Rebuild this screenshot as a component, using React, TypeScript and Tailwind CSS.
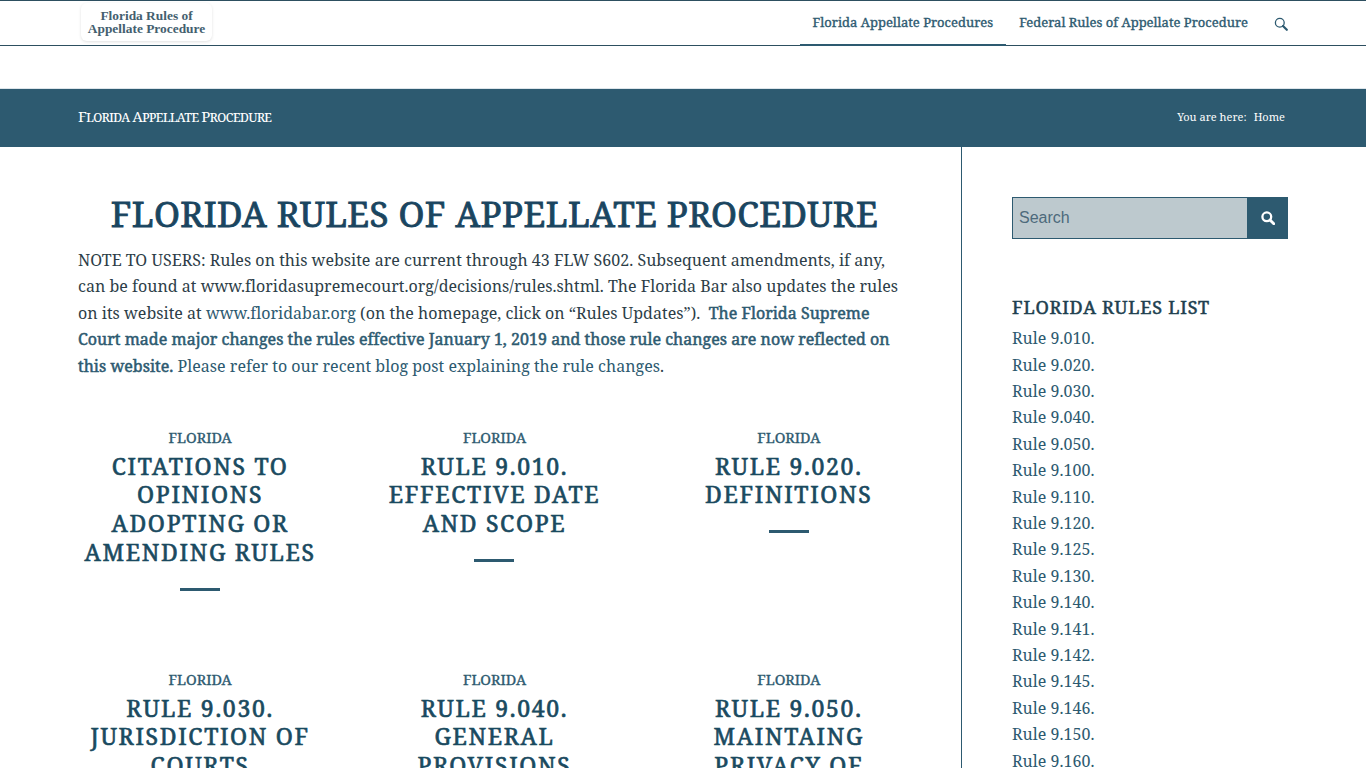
const serif = "font-['Noto_Serif','DejaVu_Serif',serif]";

const cards = [
  ["Citations to Opinions Adopting or Amending Rules"],
  ["Rule 9.010. Effective Date and Scope"],
  ["Rule 9.020. Definitions"],
  ["Rule 9.030. Jurisdiction of Courts"],
  ["Rule 9.040. General Provisions"],
  ["Rule 9.050. Maintaing Privacy of Personal Information"],
];

const rules = [
  "9.010", "9.020", "9.030", "9.040", "9.050", "9.100", "9.110", "9.120", "9.125",
  "9.130", "9.140", "9.141", "9.142", "9.145", "9.146", "9.150", "9.160",
];

const SearchIcon = ({ className, ring, handle }: { className: string; ring: number; handle: number }) => (
  <svg viewBox="0 0 14 14" fill="none" stroke="currentColor" className={className}>
    <circle cx="5.8" cy="5.8" r="4.4" strokeWidth={ring} />
    <path d="M9 9l3.8 3.8" strokeWidth={handle} strokeLinecap="round" />
  </svg>
);

const App = () => {
  return (
    <div className={`h-screen overflow-hidden bg-white text-[#2d5a70] ${serif}`}>
      <header className="h-[46px] border-t border-b border-[#2d4f60]">
        <div className="mx-[78px] flex h-[44px] items-start justify-between">
          <div className="ml-[3px] mt-[2px] flex h-[38px] w-[131px] flex-col items-center justify-center rounded-md font-['Liberation_Serif',serif] text-[13.4px] font-bold leading-[13px] text-[#44606f] shadow-[0_1px_3px_rgba(0,0,0,0.12)]">
            <span>Florida Rules of</span>
            <span>Appellate Procedure</span>
          </div>
          <nav className="flex h-[45px] items-center text-[13px] [-webkit-text-stroke:0.35px]">
            <a className="flex h-[45px] items-center border-b-2 border-[#2d5a70] px-[13px]">Florida Appellate Procedures</a>
            <a className="flex h-[45px] items-center border-b-2 border-transparent px-[13px]">Federal Rules of Appellate Procedure</a>
            <SearchIcon className="ml-[13px] h-[14px] w-[14px]" ring={1.3} handle={2.2} />
          </nav>
        </div>
      </header>

      <div className="mt-[42px] flex h-[59px] items-center justify-between border-t border-[#dde5ea] bg-[#2d5a70] pb-[3px] pl-[78px] pr-[81px] text-white">
        <h2 className="text-[15px] tracking-[-0.9px] [font-variant:small-caps]">Florida Appellate Procedure</h2>
        <div className="flex translate-y-[1px] gap-[7px] text-[11px]">
          <span>You are here:</span>
          <span>Home</span>
        </div>
      </div>

      <div className="mx-[78px] flex">
        <main className="w-[884px] border-r border-[#2d5a70] pr-[50px] pt-[43px]">
          <h1 className="text-center text-[35px] uppercase leading-[48px] tracking-[0.4px] text-[#1a4560] [-webkit-text-stroke:0.85px]">
            Florida Rules of Appellate Procedure
          </h1>
          <p className="mt-[9px] text-[16px] leading-[26.4px] tracking-[0.025px] text-[#2d3e48]">
            NOTE TO USERS: Rules on this website are current through 43 FLW S602. Subsequent amendments, if any, can be found at www.floridasupremecourt.org/decisions/rules.shtml. The Florida Bar also updates the rules on its website at{" "}
            <a className="text-[#2d5a70]">www.floridabar.org</a> (on the homepage, click on “Rules Updates”).&nbsp;{" "}
            <a className="text-[#2d5a70] [-webkit-text-stroke:0.5px]">The Florida Supreme Court made major changes the rules effective January 1, 2019 and those rule changes are now reflected on this website.</a>{" "}
            <a className="text-[#2d5a70]">Please refer to our recent blog post explaining the rule changes</a>.
          </p>
          <div className="mt-[45px] grid grid-cols-3 gap-x-[50px]">
            {cards.map(([title]) => (
              <article key={title} className="flex h-[242px] flex-col items-center text-center">
                <div className="text-[14.4px] leading-[27.5px] [-webkit-text-stroke:0.35px]">FLORIDA</div>
                <h3 className="text-[23px] uppercase leading-[28.8px] tracking-[1.7px] text-[#1a4a60] [-webkit-text-stroke:0.65px]">{title}</h3>
                <div className="mt-[21px] h-[3px] w-[40px] bg-[#2d5a70]" />
              </article>
            ))}
          </div>
        </main>

        <aside className="ml-[50px] w-[276px] pt-[50px]">
          <form className="flex h-[42px]">
            <input
              placeholder="Search"
              className="h-full min-w-0 flex-1 border border-[#2d5a70] bg-[#bdc9ce] px-[6px] font-['Liberation_Sans',sans-serif] text-[16px] text-[#2d5a70] placeholder:text-[#4d6a7c]"
            />
            <button type="button" className="flex w-[40px] items-center justify-center bg-[#2d5a70] text-white">
              <SearchIcon className="h-[14px] w-[14px]" ring={2.3} handle={2.8} />
            </button>
          </form>
          <h3 className="mt-[56px] text-[18px] uppercase leading-[24px] tracking-[0.8px] text-[#20404f] [-webkit-text-stroke:0.5px]">Florida Rules List</h3>
          <ul className="mt-[6.2px] text-[16px] leading-[26.4px] tracking-[0.025px]">
            {rules.map((r) => (
              <li key={r}>Rule {r}.</li>
            ))}
          </ul>
        </aside>
      </div>
    </div>
  );
};

export default App;
